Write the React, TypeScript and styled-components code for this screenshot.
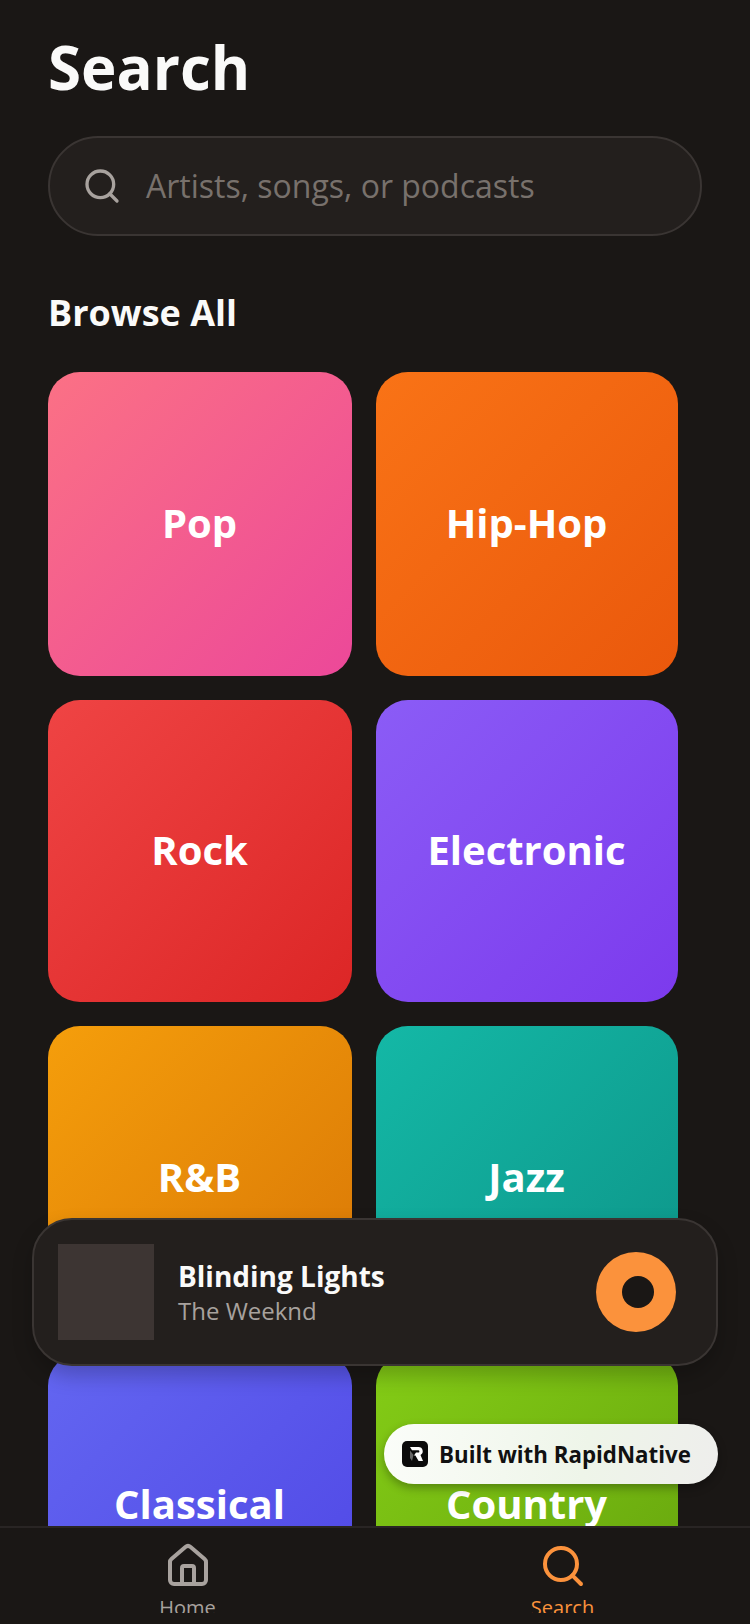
import React from "react";
import styled, { createGlobalStyle } from "styled-components";
import { House, Search } from "lucide-react";

const Global = createGlobalStyle`
  html, body { margin: 0; padding: 0; background: #1a1715; }
  * { box-sizing: border-box; }
`;

const Screen = styled.div`
  position: relative;
  width: 750px;
  height: 1624px;
  overflow: hidden;
  display: flex;
  flex-direction: column;
  background: #1a1715;
  font-family: "Open Sans", "Noto Sans", sans-serif;
`;

const Scroll = styled.main`
  flex: 1;
  min-height: 0;
  overflow: hidden;
  padding: 23px 48px 0;
`;

const Title = styled.h1`
  margin: 0;
  height: 89px;
  font-size: 60px;
  line-height: 88px;
  font-weight: 700;
  color: #fafaf9;
`;

const SearchBar = styled.div`
  margin-top: 24px;
  width: 654px;
  height: 100px;
  display: flex;
  align-items: center;
  gap: 24px;
  padding: 0 32px;
  border-radius: 50px;
  border: 2px solid #3a3533;
  background: #231f1d;
  color: #a8a29e;
`;

const Placeholder = styled.span`
  font-size: 32px;
  line-height: 44px;
  margin-top: -1px;
  color: #78716c;
`;

const SectionTitle = styled.h2`
  margin: 53px 0 0;
  height: 48px;
  font-size: 36px;
  line-height: 48px;
  font-weight: 700;
  color: #fafaf9;
`;

const Grid = styled.div`
  margin-top: 35px;
  display: grid;
  grid-template-columns: 304px 302px;
  grid-auto-rows: auto;
  gap: 24px;
`;

const Card = styled.div<{ $from: string; $to: string; $h: number }>`
  height: ${(p) => p.$h}px;
  display: flex;
  align-items: center;
  justify-content: center;
  padding: 0 1px 4px 0;
  border-radius: 32px;
  background: linear-gradient(135deg, ${(p) => p.$from}, ${(p) => p.$to});
  color: #fff;
  font-size: 40px;
  font-weight: 700;
`;

const Player = styled.section`
  position: absolute;
  left: 32px;
  top: 1218px;
  width: 686px;
  height: 148px;
  display: flex;
  align-items: center;
  padding: 0 40px 0 24px;
  border-radius: 40px;
  border: 2px solid #3a3533;
  background: #231f1d;
  box-shadow: 0 10px 20px rgba(0, 0, 0, 0.22);
`;

const Art = styled.div`
  width: 96px;
  height: 96px;
  background: #3d3533;
`;

const Track = styled.div`
  flex: 1;
  margin-left: 24px;
  display: flex;
  flex-direction: column;
`;

const TrackName = styled.div`
  font-size: 28px;
  line-height: 38px;
  margin-top: -1px;
  font-weight: 700;
  color: #fafaf9;
`;

const TrackArtist = styled.div`
  font-size: 24px;
  line-height: 32px;
  color: #a8a29e;
`;

const PlayButton = styled.div`
  width: 80px;
  height: 80px;
  border-radius: 50%;
  background: #fb923c;
  display: flex;
  align-items: center;
  justify-content: center;
`;

const PlayHole = styled.div`
  width: 32px;
  height: 32px;
  margin-left: 4px;
  border-radius: 50%;
  background: #1a1715;
`;

const Badge = styled.div`
  position: absolute;
  left: 384px;
  top: 1424px;
  width: 334px;
  height: 60px;
  display: flex;
  align-items: center;
  gap: 11px;
  padding-left: 18px;
  border-radius: 30px;
  background: linear-gradient(100deg, #fbfdf9, #eef5e9 60%, #eeeeec);
  box-shadow: 0 4px 10px rgba(0, 0, 0, 0.3);
  color: #111;
  font-size: 22.3px;
  font-weight: 700;
  white-space: nowrap;
`;

const TabBar = styled.nav`
  height: 98px;
  flex: none;
  display: flex;
  border-top: 2px solid #292524;
  background: #1a1715;
`;

const Tab = styled.div<{ $color: string }>`
  flex: 1;
  height: 85px;
  overflow: hidden;
  display: flex;
  flex-direction: column;
  align-items: center;
  padding-top: 14px;
  color: ${(p) => p.$color};
  svg { flex: none; }
`;

const TabLabel = styled.span`
  margin-top: 4px;
  font-size: 20px;
  line-height: 28px;
`;

const genres = [
  { name: "Pop", from: "#fb7185", to: "#ec4899", h: 304 },
  { name: "Hip-Hop", from: "#f97316", to: "#ea580c", h: 304 },
  { name: "Rock", from: "#ef4444", to: "#dc2626", h: 302 },
  { name: "Electronic", from: "#8b5cf6", to: "#7c3aed", h: 302 },
  { name: "R&B", from: "#f59e0b", to: "#d97706", h: 304 },
  { name: "Jazz", from: "#14b8a6", to: "#0d9488", h: 304 },
  { name: "Classical", from: "#6366f1", to: "#4f46e5", h: 302 },
  { name: "Country", from: "#84cc16", to: "#65a30d", h: 302 },
];

const Logo = () => (
  <svg width="26" height="26" viewBox="0 0 26 26" aria-hidden="true">
    <rect width="26" height="26" rx="5" fill="#0b0b0b" />
    <path d="M8 6h8.5a4.2 4.2 0 0 1 2 7.9L21 20h-4.4l-3.2-5.4H12l2-3h2.2a1 1 0 0 0 0-2.4H10z" fill="#fff" />
    <path d="M8 9.5 11.5 14l-1.5 6-2-3z" fill="#666" />
  </svg>
);

export default function App() {
  return (
    <Screen>
      <Global />
      <Scroll>
        <Title>Search</Title>
        <SearchBar>
          <Search size={40} strokeWidth={2} />
          <Placeholder>Artists, songs, or podcasts</Placeholder>
        </SearchBar>
        <SectionTitle>Browse All</SectionTitle>
        <Grid>
          {genres.map((g) => (
            <Card key={g.name} $from={g.from} $to={g.to} $h={g.h}>
              {g.name}
            </Card>
          ))}
        </Grid>
      </Scroll>
      <TabBar>
        <Tab $color="#a8a29e">
          <House size={48} strokeWidth={2} />
          <TabLabel>Home</TabLabel>
        </Tab>
        <Tab $color="#fb923c">
          <Search size={48} strokeWidth={2} />
          <TabLabel>Search</TabLabel>
        </Tab>
      </TabBar>
      <Player>
        <Art />
        <Track>
          <TrackName>Blinding Lights</TrackName>
          <TrackArtist>The Weeknd</TrackArtist>
        </Track>
        <PlayButton>
          <PlayHole />
        </PlayButton>
      </Player>
      <Badge>
        <Logo />
        Built with RapidNative
      </Badge>
    </Screen>
  );
}
